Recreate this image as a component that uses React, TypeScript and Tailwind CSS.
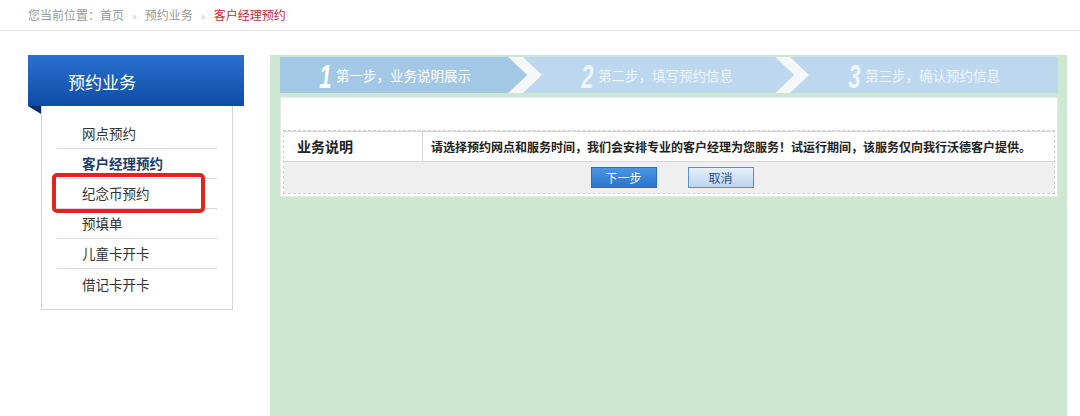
import React from 'react';

const menu = ['网点预约', '客户经理预约', '纪念币预约', '预填单', '儿童卡开卡', '借记卡开卡'];

const steps = [
  { n: '1', label: '第一步，业务说明展示', bg: 'bg-[#a3c8e6]', text: 'text-white', w: 'w-[228px]' },
  { n: '2', label: '第二步，填写预约信息', bg: 'bg-[#bcd7ee]', text: 'text-[#eef5fb]', w: 'w-[233px]' },
  { n: '3', label: '第三步，确认预约信息', bg: 'bg-[#bcd7ee]', text: 'text-[#eef5fb]', w: 'flex-1' },
];

function Chevron({ left, right }: { left: string; right: string }) {
  return (
    <svg width="34" height="36" viewBox="0 0 34 36" className="block shrink-0">
      <rect x="0" y="0" width="34" height="36" fill={right} />
      <polygon points="0,0 15,0 34,18 15,36 0,36 19,18" fill="#f4f8fb" />
      <polygon points="0,0 19,18 0,36" fill={left} />
    </svg>
  );
}

function StepBar() {
  return (
    <div className="flex h-[36px]">
      {steps.map((s, i) => (
        <React.Fragment key={s.n}>
          {i > 0 && <Chevron left={i === 1 ? '#a3c8e6' : '#bcd7ee'} right="#bcd7ee" />}
          <div className={`${s.w} ${s.bg} ${s.text} flex items-center pl-[36px] h-full`}>
            <span className="inline-block font-['Liberation_Sans'] italic font-bold text-[34px] leading-none scale-x-[0.65] mr-[1px] translate-y-[1px]">{s.n}</span>
            <span className="text-[13.5px]">{s.label}</span>
          </div>
        </React.Fragment>
      ))}
    </div>
  );
}

function Sidebar() {
  return (
    <div className="w-[216px] shrink-0 relative">
      <div className="h-[51px] bg-gradient-to-b from-[#2b70cf] to-[#0b4da6] text-white text-[17px] flex items-center pl-[40px] pt-[2px]">预约业务</div>
      <div className="flex">
        <div className="w-0 h-0 border-t-[8px] border-t-[#0a2f66] border-l-[13px] border-l-transparent" />
        <div className="w-[192px] border border-t-0 border-[#d4d4d4] bg-white pt-[13px] pb-[10px] px-[15px]">
          {menu.map((m, i) => (
            <div
              key={m}
              className={`h-[30px] flex items-center pl-[25px] text-[13.5px] ${i < menu.length - 1 ? 'border-b border-[#d9d9d9]' : ''} ${i === 1 ? 'font-bold text-[#203c6c]' : 'text-[#333]'}`}
            >
              {m}
            </div>
          ))}
        </div>
      </div>
      <div className="absolute left-[24px] top-[118px] w-[153px] h-[40px] border-[4px] border-[#e3231d] rounded-[5px]" />
    </div>
  );
}

export default function App() {
  return (
    <div className="w-[1080px] h-[416px] overflow-hidden bg-white font-['Noto_Sans_CJK_SC',sans-serif]">
      <div className="h-[31px] border-b border-[#e6e6e6] flex items-center pl-[28px] text-[12px] text-[#9a9a9a]">
        <span>您当前位置：首页</span>
        <span className="mx-[8px] text-[10px] text-[#cacaca]">»</span>
        <span>预约业务</span>
        <span className="mx-[8px] text-[10px] text-[#cacaca]">»</span>
        <span className="text-[#c8282e]">客户经理预约</span>
      </div>

      <div className="flex pt-[24px] pl-[28px]">
        <Sidebar />
        <div className="ml-[26px] w-[797px] h-[361px] bg-[#cde7d0] pt-[2px] pl-[10px] pr-[9px]">
          <StepBar />
          <div className="mt-[4px] bg-white border border-[#e3ebe3] pt-[32px] px-[2px] pb-[2px]">
            <div className="border border-dashed border-[#cfcfcf]">
              <div className="flex h-[31px] border-t border-b border-[#d6d6d6] bg-white items-center font-bold text-[#222]">
                <div className="w-[139px] h-full flex items-center pl-[13px] text-[14px] border-r border-[#d6d6d6]">业务说明</div>
                <div className="pl-[8px] text-[12px]">请选择预约网点和服务时间，我们会安排专业的客户经理为您服务！试运行期间，该服务仅向我行沃德客户提供。</div>
              </div>
              <div className="h-[31px] bg-[#efefef] flex items-center justify-center gap-[31px] pl-[6px] text-[12px]">
                <button className="w-[66px] h-[21px] bg-gradient-to-b from-[#4b95e3] to-[#2a74cf] border border-[#2a6bbf] text-white">下一步</button>
                <button className="w-[66px] h-[21px] bg-gradient-to-b from-[#e6f0fb] to-[#bcd5f0] border border-[#5c8fc6] text-[#1f4f86]">取消</button>
              </div>
            </div>
          </div>
        </div>
      </div>
    </div>
  );
}
